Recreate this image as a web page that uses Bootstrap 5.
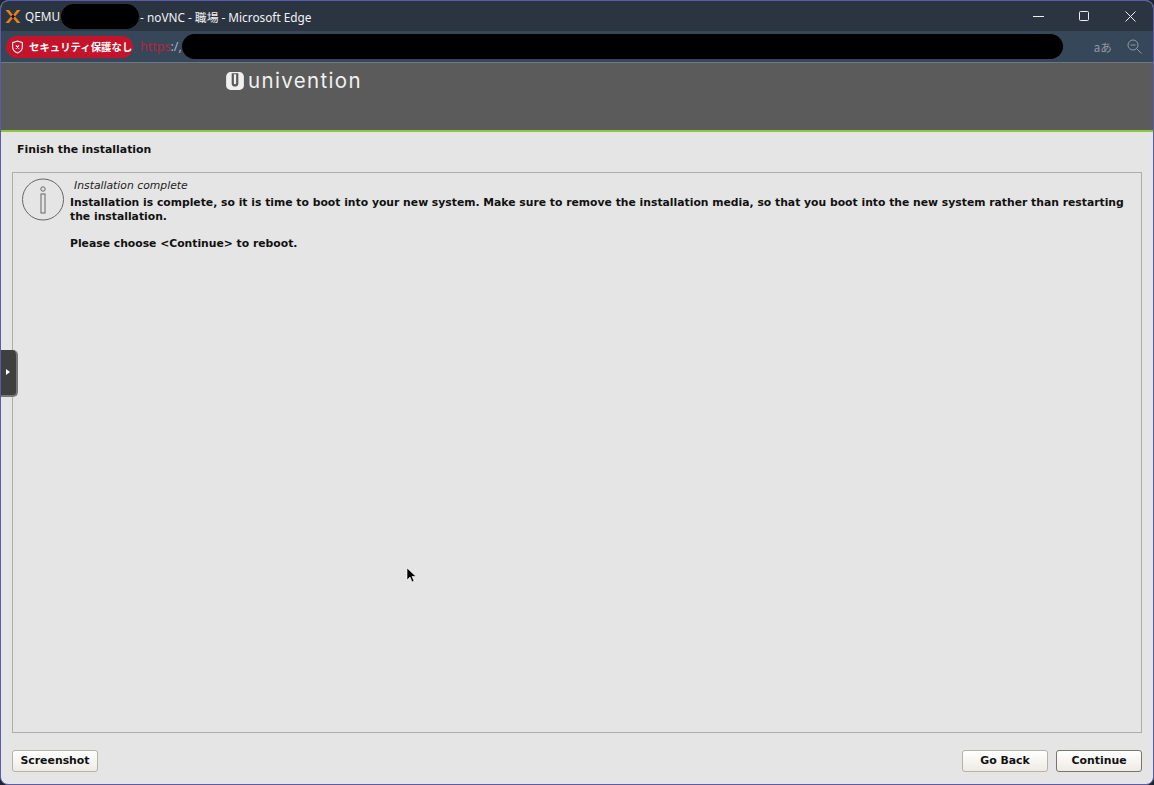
<!doctype html>
<html lang="en">
<head>
<meta charset="utf-8">
<title>QEMU noVNC</title>
<link href="https://cdn.jsdelivr.net/npm/bootstrap@5.3.0/dist/css/bootstrap.min.css" rel="stylesheet">
<style>
html,body{height:785px;overflow:hidden;background:#1d2530}
.win{height:785px;border:1px solid #5d5aae;border-radius:8px;overflow:hidden;background:#e5e5e5;position:relative}
.tbar{height:30px;background:#2b3542;color:#f2f2f2;font:11.8px "Segoe UI","Noto Sans","Noto Sans CJK JP",sans-serif}
.tbar .logo{margin:0 3px 0 3px}
.redact{background:#000;border-radius:13px;height:25px}
.r1{width:78px;margin:0 1px 0 1px}
.wbtn{width:46px;height:30px}
.abar{height:32px;background:#37475a;border-bottom:1px solid #6d7886;padding-left:5px}
.sec{background:#c4142b;color:#fff;border-radius:11px;height:22px;width:127px;font:bold 10.4px "Noto Sans CJK JP",sans-serif;padding-left:5px;gap:5px;margin-right:7px;white-space:nowrap}
.url{font:12.5px "Segoe UI","Noto Sans",sans-serif;color:#b3263a;white-space:nowrap}
.url span{color:#aab2bc}
.r2{width:881px;height:25px;margin-right:31px}
.aicons{gap:15px}
.tr{font:11.500px/14px "Noto Sans CJK JP",sans-serif;color:#8f99a6;white-space:nowrap}
.vhead{background:#5b5b5b;border-bottom:2px solid #8cc63f;padding-left:224px;height:69px;padding-top:4px}
.brand{color:#f1f1f1;font:400 20.5px/22px "Inter",sans-serif;letter-spacing:1.35px;margin-left:3px;margin-top:3px}
.stage{height:652px;padding:0 11px;font-family:"DejaVu Sans",sans-serif;color:#111}
.ttl{font-size:10.9px;font-weight:700;padding:11px 0 0 5px;height:40px;line-height:14px}
.panel{height:561px;border:1px solid #adadad;padding:5px 9px 4px;gap:4px}
.sub{font-size:10.8px;font-style:italic;padding-left:4px;line-height:16px;color:#222}
.body-t{font-size:10.8px;font-weight:700;line-height:13.5px;margin:2px 0 14px}
.foot{padding-top:17px}
.vbtn{font:700 10.9px "DejaVu Sans",sans-serif;height:22px;padding:0;background:linear-gradient(#fff,#eeebe4);border:1px solid #b5b2aa;border-radius:3px;color:#111;line-height:20px}
.b1{width:86px}.b2{width:86px}.b3{width:86px;border-color:#77756f}
.tab{position:absolute;left:0;top:349px;width:17px;height:47px;background:#3f3f3f;border:solid #777;border-width:0 2px 2px 0;border-radius:0 5px 5px 0}
.tab i{position:absolute;left:5px;top:19px;border-left:4px solid #fff;border-top:3px solid transparent;border-bottom:3px solid transparent}
.cursor{position:absolute;left:405px;top:566px}
</style>
</head>
<body>
<div class="win">
  <div class="tbar d-flex align-items-center">
    <svg class="logo" width="18" height="15" viewBox="0 0 17 15"><path d="M1 1h3.500L8.500 6 12.500 1H16L10.500 7.500 16 14h-3.500L8.500 9 4.500 14H1l5.500-6.500z" fill="#e57f1f"/><path d="M6.500 7.500 8.500 5.500 10.500 7.500 8.500 9.500z" fill="#111"/></svg>
    <span>QEMU</span><div class="redact r1"></div><span>- noVNC - 職場 - Microsoft Edge</span>
    <div class="ms-auto d-flex">
      <div class="wbtn d-flex align-items-center justify-content-center"><svg width="11" height="11"><path d="M0 5.500h11" stroke="#eee"/></svg></div>
      <div class="wbtn d-flex align-items-center justify-content-center"><svg width="11" height="11"><rect x=".5" y=".5" width="9" height="9" rx="1" fill="none" stroke="#eee"/></svg></div>
      <div class="wbtn d-flex align-items-center justify-content-center"><svg width="11" height="11"><path d="M.5.500l10 10M10.500.500l-10 10" stroke="#eee"/></svg></div>
    </div>
  </div>
  <div class="abar d-flex align-items-center">
    <div class="sec d-flex align-items-center">
      <svg width="13" height="14" viewBox="0 0 12 13"><path d="M6 1l4.500 1.500V6.500C10.500 9.500 8.500 11 6 12 3.500 11 1.500 9.500 1.500 6.500V2.500z" fill="none" stroke="#fff"/><path d="M4.500 5l3 3M7.500 5l-3 3" stroke="#fff"/></svg>
      <span>セキュリティ保護なし</span>
    </div>
    <div class="url">https<span>:/,</span></div>
    <div class="redact r2"></div>
    <div class="d-flex align-items-center aicons">
      <span class="tr">aあ</span>
      <svg width="15" height="15" viewBox="0 0 15 15"><circle cx="6" cy="6" r="5" fill="none" stroke="#8f99a6"/><path d="M3.500 6h5M9.500 9.500l5 5" stroke="#8f99a6"/></svg>
    </div>
  </div>
  <div class="vhead d-flex align-items-start">
    <svg width="20" height="20" viewBox="0 0 18 18" class="mt-1"><rect x="1" y="1" width="16" height="16" rx="4" fill="#f0f0f0"/><path d="M6 2v9a3 3 0 0 0 6 0V2" fill="#5b5b5b"/><path d="M8 3v8a1 1 0 0 0 2 0V3z" fill="#f0f0f0"/></svg>
    <div class="brand">univention</div>
  </div>
  <div class="stage">
    <div class="ttl">Finish the installation</div>
    <div class="panel d-flex">
      <svg width="44" height="44" viewBox="0 0 44 44" class="flex-shrink-0"><circle cx="21" cy="21.500" r="20.500" fill="none" stroke="#666"/><circle cx="21" cy="11" r="2.200" fill="none" stroke="#666"/><rect x="19" y="16" width="4" height="19" fill="none" stroke="#666"/></svg>
      <div>
        <div class="sub">Installation complete</div>
        <div class="body-t">Installation is complete, so it is time to boot into your new system. Make sure to remove the installation media, so that you boot into the new system rather than restarting the installation.</div>
        <div class="body-t">Please choose &lt;Continue&gt; to reboot.</div>
      </div>
    </div>
    <div class="foot d-flex">
      <button class="btn vbtn b1">Screenshot</button>
      <button class="btn vbtn b2 ms-auto me-2">Go Back</button>
      <button class="btn vbtn b3">Continue</button>
    </div>
  </div>
  <div class="tab"><i></i></div>
  <svg class="cursor" width="11" height="17" viewBox="0 0 11 17"><path d="M1 1v12l3-3 2 5 2-1-2-4.500h4z" fill="#000" stroke="#fff" stroke-width=".6"/></svg>
</div>
<script src="https://cdn.jsdelivr.net/npm/bootstrap@5.3.0/dist/js/bootstrap.bundle.min.js"></script>
</body>
</html>
